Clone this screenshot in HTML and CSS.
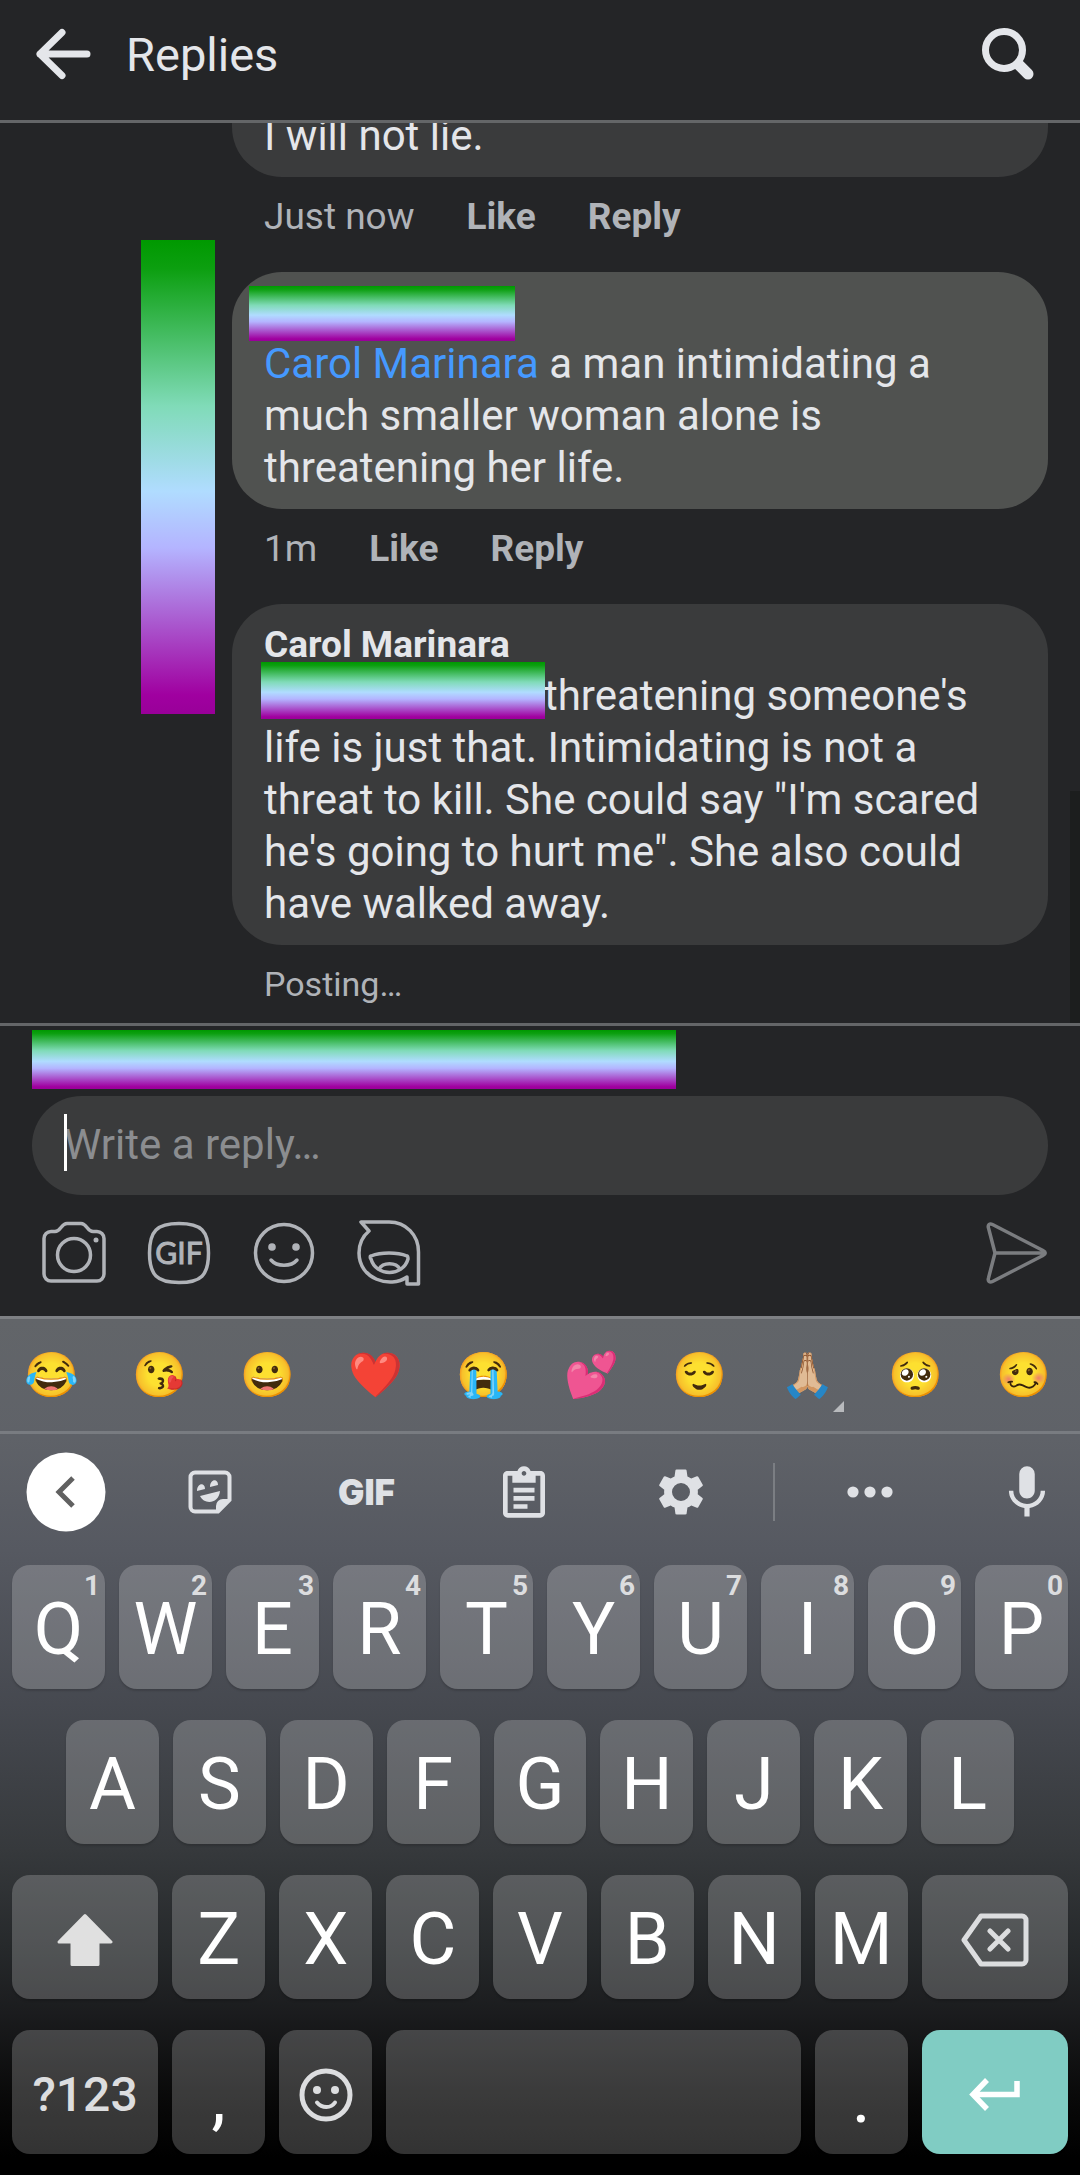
FILE: index.html
```html
<!DOCTYPE html>
<html lang="en">
<head>
<meta charset="utf-8">
<meta name="viewport" content="width=device-width, initial-scale=1">
<title>Replies</title>
<link rel="stylesheet" href="styles.css">
</head>
<body>
<div class="app">
  <header class="topbar">
    <button class="icon-btn" aria-label="Back">
      <svg width="56" height="56" viewBox="0 0 56 56" fill="none" stroke="#e4e6ea" stroke-width="7" stroke-linecap="round" stroke-linejoin="round"><path d="M27 6.500 5 28l22 21.500M5 28h47"/></svg>
    </button>
    <h1 class="topbar-title">Replies</h1>
    <button class="icon-btn" aria-label="Search">
      <svg width="56" height="56" viewBox="0 0 56 56" fill="none" stroke="#e4e6ea" stroke-linecap="round"><circle cx="24" cy="24" r="18.500" stroke-width="7"/><path d="M39 39l9 9" stroke-width="11"/></svg>
    </button>
  </header>

  <main class="thread">
    <article class="comment">
      <div class="bubble bubble-continued"><p class="comment-text">I will not lie.</p></div>
      <div class="meta"><span>Just now</span><button class="meta-btn">Like</button><button class="meta-btn">Reply</button></div>
    </article>

    <article class="comment">
      <span class="redaction redaction-avatars"></span>
      <div class="bubble bubble-highlight">
        <div class="author"><span class="redaction redaction-author"></span></div>
        <p class="comment-text"><a class="mention" href="#">Carol Marinara</a> a man intimidating a much smaller woman alone is threatening her life.</p>
      </div>
      <div class="meta"><span>1m</span><button class="meta-btn">Like</button><button class="meta-btn">Reply</button></div>
    </article>

    <article class="comment">
      <div class="bubble">
        <div class="author">Carol Marinara</div>
        <p class="comment-text"><span class="hidden-mention"><span class="redaction redaction-mention"></span></span>threatening someone's life is just that. Intimidating is not a threat to kill. She could say "I'm scared he's going to hurt me". She also could have walked away.</p>
      </div>
      <div class="meta meta-posting">Posting…</div>
    </article>
    <span class="scrollbar"></span>
  </main>

  <form class="composer">
    <div class="replying-to"></div>
    <div class="field">
      <input class="reply-input" type="text" placeholder="Write a reply…" aria-label="Write a reply">
      <span class="caret"></span>
    </div>
    <div class="attachments">
      <button type="button" class="icon-btn" aria-label="Camera">
        <svg width="64" height="64" viewBox="0 0 64 64" fill="none" stroke="#b0b3b8" stroke-width="3.500"><path d="M9 10.500h4c6 0 6-8 12-8h14c6 0 6 8 12 8h4a7 7 0 0 1 7 7V53a7 7 0 0 1-7 7H9a7 7 0 0 1-7-7V17.500a7 7 0 0 1 7-7z"/><circle cx="32" cy="34" r="16.500"/><circle cx="54" cy="19" r="2.500" fill="#b0b3b8" stroke="none"/></svg>
      </button>
      <button type="button" class="icon-btn" aria-label="GIF">
        <svg width="64" height="64" viewBox="0 0 64 64"><path d="M32 2.500c22 0 29.500 7 29.500 29.500S54 61.500 32 61.500 2.500 54 2.500 32 10 2.500 32 2.500z" fill="none" stroke="#b0b3b8" stroke-width="3.500"/><text class="gif-outline" x="32" y="43" text-anchor="middle">GIF</text></svg>
      </button>
      <button type="button" class="icon-btn" aria-label="Emoji">
        <svg width="64" height="64" viewBox="0 0 64 64" fill="none" stroke="#b0b3b8" stroke-width="3.500" stroke-linecap="round"><circle cx="32" cy="32" r="28.500"/><path d="M19 39c6 7 20 7 26 0"/><g fill="#b0b3b8" stroke="none"><circle cx="20" cy="26" r="3.800"/><circle cx="44" cy="26" r="3.800"/></g></svg>
      </button>
      <button type="button" class="icon-btn" aria-label="Avatar sticker">
        <svg width="64" height="68" viewBox="0 0 64 68" fill="none" stroke="#b0b3b8" stroke-width="3.500" stroke-linejoin="round"><path d="M4 3h28c17 0 29.500 13 29.500 30v32H50v-7C33 70 2 60 2 34c0-10 4-17 10-22z"/><path d="M14 37c10-4 26-4 36 0 1 0 1 2 1 3-5 18-32 18-37 0-1-1-1-3 0-3z"/><path d="M22 50c4-7 17-7 21 0"/></svg>
      </button>
      <button type="submit" class="icon-btn send" aria-label="Send">
        <svg width="64" height="64" viewBox="0 0 64 64" fill="none" stroke="#7b7d80" stroke-width="3.500" stroke-linejoin="round"><path d="M11 32h50M4.500 7c-1-3 1-5 4-3.500L59 29.500c3 1.500 3 3.500 0 5L8.500 60.500c-3 1.500-5-.500-4-3.500L11 32z"/></svg>
      </button>
    </div>
  </form>

  <section class="keyboard">
    <div class="emoji-row">
      <button class="emoji">😂</button><button class="emoji">😘</button><button class="emoji">😀</button><button class="emoji">❤️</button><button class="emoji">😭</button><button class="emoji">💕</button><button class="emoji">😌</button><button class="emoji emoji-variants">🙏🏼</button><button class="emoji">🥺</button><button class="emoji">🥴</button>
    </div>

    <div class="tools">
      <button class="tool tool-back" aria-label="Close toolbar"><svg width="80" height="80" viewBox="0 0 80 80"><circle cx="40" cy="40" r="39.500" fill="#fff"/><path d="M47 26 33 40l14 14" fill="none" stroke="#616161" stroke-width="5"/></svg></button>
      <button class="tool" aria-label="Stickers"><svg width="44" height="44" viewBox="0 0 44 44"><path d="M7 2.500h30a4.500 4.500 0 0 1 4.500 4.500v23L30 41.500H7A4.500 4.500 0 0 1 2.500 37V7A4.500 4.500 0 0 1 7 2.500z" fill="none" stroke="#dfe1e5" stroke-width="4"/><path d="M28 42v-6a7 7 0 0 1 7-7h7zM9 21c0-8 8-9 8-2zM22 17c0-8 8-9 8-2zM12 26l20-5c-1 13-16 14-20 5z" fill="#dfe1e5"/></svg></button>
      <button class="tool tool-gif">GIF</button>
      <button class="tool" aria-label="Clipboard"><svg width="56" height="56" viewBox="0 0 24 24" fill="#dfe1e5"><path d="M19 3h-4.180C14.400 1.840 13.300 1 12 1s-2.400.840-2.820 2H5c-1.100 0-2 .900-2 2v16c0 1.100.900 2 2 2h14c1.100 0 2-.900 2-2V5c0-1.100-.900-2-2-2zm-7 0c.550 0 1 .450 1 1s-.450 1-1 1-1-.450-1-1 .450-1 1-1zm7 18H5V5h2v3h10V5h2z"/><path d="M7.500 10.200h9v2h-9zM7.500 13.700h9v2h-9zM7.500 17.200h6v2h-6z"/></svg></button>
      <button class="tool" aria-label="Settings"><svg width="54" height="54" viewBox="0 0 24 24" fill="#dfe1e5"><path d="M19.430 12.980c.040-.320.070-.640.070-.980s-.030-.660-.070-.980l2.110-1.650c.190-.150.240-.420.120-.640l-2-3.460c-.120-.220-.390-.300-.610-.220l-2.490 1c-.520-.400-1.080-.730-1.690-.980l-.380-2.650C14.460 2.180 14.250 2 14 2h-4c-.250 0-.460.180-.490.420l-.380 2.650c-.610.250-1.170.590-1.690.980l-2.490-1c-.230-.090-.490 0-.610.220l-2 3.460c-.130.220-.070.490.120.640l2.110 1.650c-.040.320-.070.650-.070.980s.030.660.070.980l-2.110 1.650c-.190.150-.240.420-.120.640l2 3.460c.120.220.390.300.610.220l2.490-1c.520.400 1.080.730 1.690.980l.380 2.650c.030.240.240.420.490.420h4c.250 0 .460-.180.490-.420l.380-2.650c.610-.250 1.170-.590 1.690-.980l2.490 1c.230.090.490 0 .610-.220l2-3.460c.120-.220.070-.490-.120-.640zM12 16a4 4 0 1 1 0-8 4 4 0 0 1 0 8z"/></svg></button>
      <span class="divider"></span>
      <button class="tool" aria-label="More"><svg width="46" height="12" viewBox="0 0 46 12" fill="#dfe1e5"><circle cx="6" cy="6" r="5.600"/><circle cx="23" cy="6" r="5.600"/><circle cx="40" cy="6" r="5.600"/></svg></button>
      <button class="tool tool-mic" aria-label="Voice input"><svg width="62" height="62" viewBox="0 0 24 24" fill="#dfe1e5"><path d="M12 14.500c1.660 0 3-1.340 3-3V5a3 3 0 0 0-6 0v6.500c0 1.660 1.340 3 3 3zm5.300-3c0 3-2.540 5.100-5.300 5.100s-5.300-2.100-5.300-5.100H5c0 3.410 2.720 6.230 6 6.720V21.500h2v-3.280c3.280-.480 6-3.300 6-6.720z"/></svg></button>
    </div>

    <div class="keys">
      <div class="key-row">
        <button class="key">Q<small>1</small></button><button class="key">W<small>2</small></button><button class="key">E<small>3</small></button><button class="key">R<small>4</small></button><button class="key">T<small>5</small></button><button class="key">Y<small>6</small></button><button class="key">U<small>7</small></button><button class="key">I<small>8</small></button><button class="key">O<small>9</small></button><button class="key">P<small>0</small></button>
      </div>
      <div class="key-row key-row-inset">
        <button class="key">A</button><button class="key">S</button><button class="key">D</button><button class="key">F</button><button class="key">G</button><button class="key">H</button><button class="key">J</button><button class="key">K</button><button class="key">L</button>
      </div>
      <div class="key-row">
        <button class="key key-wide" aria-label="Shift"><svg width="56" height="54" viewBox="0 0 56 54" fill="#e0e0e0" stroke="#e0e0e0" stroke-width="3" stroke-linejoin="round"><path d="M28 2.500 54 29H41v22.500H15V29H2z"/></svg></button>
        <button class="key">Z</button><button class="key">X</button><button class="key">C</button><button class="key">V</button><button class="key">B</button><button class="key">N</button><button class="key">M</button>
        <button class="key key-wide" aria-label="Backspace"><svg width="68" height="54" viewBox="0 0 68 54" fill="none" stroke="#dcdddf" stroke-width="5" stroke-linejoin="round" stroke-linecap="round"><path d="M20 3h41a4 4 0 0 1 4 4v40a4 4 0 0 1-4 4H20L3 27zM29 18l18 18M47 18 29 36"/></svg></button>
      </div>
      <div class="key-row">
        <button class="key key-wide key-symbols">?123</button>
        <button class="key key-punct">,</button>
        <button class="key" aria-label="Emoji keyboard"><svg width="54" height="54" viewBox="0 0 54 54" fill="none" stroke="#dcdddf" stroke-width="5" stroke-linecap="round"><circle cx="27" cy="27" r="24"/><path d="M18 34.500c5 6 14 6 18 0" stroke-width="4"/><g fill="#dcdddf" stroke="none"><circle cx="18" cy="22" r="4"/><circle cx="36" cy="22" r="4"/></g></svg></button>
        <button class="key key-space" aria-label="Space"></button>
        <button class="key key-punct">.</button>
        <button class="key key-wide key-enter" aria-label="Enter"><svg width="52" height="34" viewBox="0 0 52 34" fill="none" stroke="#fff" stroke-width="5.500"><path d="M48 3v13.500H5M18 2 4 16.500 18 31"/></svg></button>
      </div>
    </div>
  </section>
</div>
</body>
</html>
```
FILE: styles.css
```css
* { box-sizing: border-box; }

body {
  margin: 0;
  background: #242527;
  color: #e4e6ea;
  font-family: Roboto, "Noto Sans", sans-serif;
}

button {
  margin: 0;
  padding: 0;
  border: 0;
  background: none;
  color: inherit;
  font: inherit;
}

svg { display: block; }

.app {
  display: flex;
  flex-direction: column;
  height: 100vh;
}

/* Header */
.topbar {
  display: flex;
  flex: none;
  align-items: center;
  gap: 35px;
  height: 123px;
  padding: 0 44px 12px 35px;
  border-bottom: 3px solid #646668;
}

.topbar-title {
  flex: 1;
  margin: 0;
  padding-top: 2px;
  font-size: 47px;
  font-weight: 400;
  line-height: 56px;
}

/* Thread */
.thread {
  position: relative;
  display: flex;
  flex: 1;
  flex-direction: column;
  justify-content: flex-end;
  min-height: 0;
  padding: 0 32px 0 232px;
  overflow: hidden;
}

.comment { position: relative; }

.bubble {
  padding: 16px 32px 15px;
  border-radius: 50px;
  background: #3a3b3c;
}

.bubble-continued { border-radius: 0 0 50px 50px; }
.bubble-highlight { background: #505250; }

.author {
  position: relative;
  height: 50px;
  font-size: 37px;
  font-weight: 700;
  line-height: 50px;
}

.comment-text {
  margin: 0;
  font-size: 42px;
  line-height: 52px;
}

.mention {
  color: #4599ff;
  text-decoration: none;
}

.meta {
  display: flex;
  gap: 52px;
  padding: 18px 32px 34px;
  color: #b0b3b8;
  font-size: 37px;
  line-height: 43px;
}

.meta-btn { font-weight: 700; }

.meta-posting {
  padding-bottom: 17px;
  font-size: 34px;
}

.redaction {
  position: absolute;
  background: linear-gradient(#009900, #0c9f10 6%, #80dbb8 35%, #b0dcff 53%, #b4b4ff 65%, #a000a0 96%, #990099);
}

.redaction-avatars { top: -32px; left: -91px; width: 74px; height: 474px; }
.redaction-author { top: -2px; left: -15px; width: 266px; height: 55px; }

.hidden-mention {
  position: relative;
  display: inline-block;
  width: 280px;
  height: 52px;
  vertical-align: top;
}

.redaction-mention { top: -8px; left: -3px; width: 284px; height: 57px; }

.scrollbar {
  position: absolute;
  right: 0;
  bottom: 0;
  width: 10px;
  height: 232px;
  background: #1c1e1e;
}

/* Composer */
.composer {
  flex: none;
  padding: 4px 32px 0;
  border-top: 3px solid #646668;
}

.replying-to {
  width: 644px;
  max-width: 100%;
  height: 59px;
  margin-bottom: 7px;
  background: linear-gradient(#009900, #0c9f10 6%, #80dbb8 35%, #b0dcff 53%, #b4b4ff 65%, #a000a0 96%, #990099);
}

.field { position: relative; }

.reply-input {
  display: block;
  width: 100%;
  height: 99px;
  padding: 0 32px 2px;
  border: 0;
  border-radius: 50px;
  outline: 0;
  background: #3a3b3c;
  color: #e4e6ea;
  font-family: inherit;
  font-size: 42px;
}

.reply-input::placeholder { color: #8b8d90; opacity: 1; }

.caret {
  position: absolute;
  top: 18px;
  left: 32px;
  width: 3px;
  height: 57px;
  background: #fff;
}

.attachments {
  display: flex;
  align-items: center;
  gap: 41px;
  height: 121px;
  padding: 0 0 6px 10px;
}

.send { margin-left: auto; }

.gif-outline {
  fill: #b0b3b8;
  stroke: #b0b3b8;
  stroke-width: 1px;
  font-family: Lato, sans-serif;
  font-size: 30px;
}

/* Keyboard */
.keyboard {
  flex: none;
  border-top: 3px solid #7e8084;
  background: linear-gradient(#626569, #5f6268 14%, #565961 27%, #464950 45%, #36393c 62%, #25282a 74%, #1b1c1e 81%, #090909 91%, #000 98%);
}

.emoji-row {
  display: grid;
  grid-template-columns: repeat(10, 1fr);
  height: 115px;
  border-bottom: 3px solid #797c81;
}

.emoji {
  position: relative;
  padding-right: 5px;
  font-family: "Noto Color Emoji", sans-serif;
  font-size: 44px;
}

.emoji-variants::after {
  content: "";
  position: absolute;
  right: 20px;
  bottom: 19px;
  border-right: 11px solid #b8babd;
  border-top: 11px solid transparent;
}

.tools {
  display: grid;
  grid-template-columns: 131px repeat(4, 1fr) 30px 162px 129px;
  align-items: center;
  justify-items: center;
  height: 116px;
}

.tool { display: grid; place-items: center; }

.tool-gif {
  color: #dfe1e5;
  font-family: Inter, sans-serif;
  font-size: 35px;
  font-weight: 900;
}

.tool-mic { justify-self: end; padding-right: 22px; }

.divider { width: 2px; height: 58px; background: #7b7e83; }

.keys {
  display: flex;
  flex-direction: column;
  gap: 31px;
  padding: 15px 12px 21px;
}

.key-row { display: flex; gap: 14px; }
.key-row-inset { padding: 0 54px; }

.key {
  position: relative;
  display: flex;
  flex: 93 1 0;
  align-items: center;
  justify-content: center;
  height: 124px;
  padding-top: 5px;
  border-radius: 18px;
  background: rgba(255, 255, 255, 0.2);
  box-shadow: 0 2px 2px rgba(0, 0, 0, 0.15);
  color: #fff;
  font-size: 72px;
  line-height: 84px;
}

.key small {
  position: absolute;
  top: 5px;
  right: 5px;
  color: #dcdddf;
  font-size: 28px;
  font-weight: 700;
  line-height: 32px;
}

.key-wide { flex-grow: 146; }
.key-space { flex-grow: 414; }

.key-symbols {
  color: #dcdddf;
  font-size: 48px;
  font-weight: 500;
}

.key-punct { padding-top: 12px; }
.key-enter { background: #80ccc3; }
```
